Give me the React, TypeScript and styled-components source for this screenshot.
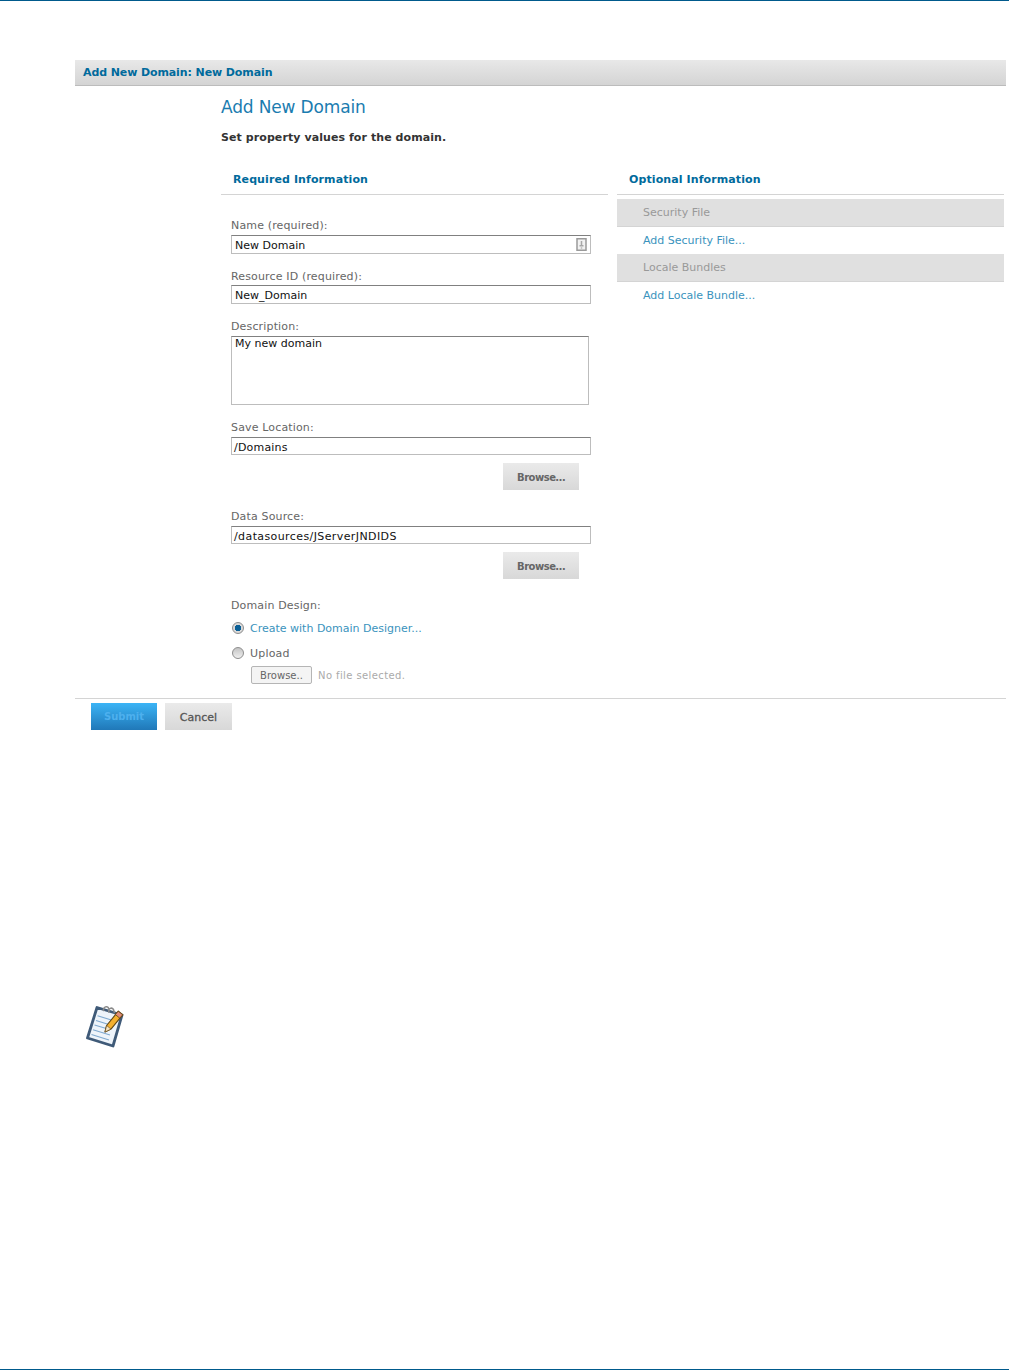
import React from "react";
import styled, { createGlobalStyle } from "styled-components";

const GlobalStyle = createGlobalStyle`
  html, body {
    margin: 0;
    padding: 0;
    background: #fff;
    font-family: "DejaVu Sans", Verdana, sans-serif;
    font-size: 11px;
  }
`;

const Page = styled.div`
  width: 1009px;
  height: 1370px;
  box-sizing: border-box;
  border-top: 1px solid #005a8c;
  border-bottom: 1px solid #005a8c;
  padding: 59px 3px 0 75px;
  overflow: hidden;
`;

const TitleBar = styled.div`
  height: 25px;
  padding-left: 8px;
  display: flex;
  align-items: center;
  background: linear-gradient(#e8e8e8, #d4d4d4);
  border-bottom: 1px solid #bcbcbc;
  color: #006a9c;
  font-size: 11px;
  font-weight: bold;
  letter-spacing: -0.1px;
`;

const Body = styled.div`
  padding-left: 146px;
  padding-right: 2px;
`;

const Heading = styled.h1`
  margin: 10px 0 0;
  height: 22px;
  line-height: 22px;
  font-size: 17px;
  font-weight: normal;
  letter-spacing: -0.15px;
  color: #1a7cb0;
`;

const Intro = styled.p`
  margin: 13px 0 0;
  height: 14px;
  line-height: 14px;
  font-size: 11px;
  font-weight: bold;
  letter-spacing: 0.08px;
  color: #333;
`;

const Columns = styled.div`
  margin-top: 20px;
  display: grid;
  grid-template-columns: 387px 387px;
  column-gap: 9px;
`;

const ColumnHead = styled.div`
  height: 30px;
  padding: 8px 0 0 12px;
  box-sizing: border-box;
  border-bottom: 1px solid #d4d4d4;
  line-height: 14px;
  color: #006a9c;
  font-weight: bold;
  letter-spacing: 0.1px;
`;

const Fields = styled.div`
  padding: 24px 0 0 10px;
`;

const Field = styled.div<{ $gap?: number }>`
  margin-bottom: ${(p) => p.$gap ?? 16}px;
`;

const Label = styled.div<{ $gap?: number }>`
  height: 14px;
  line-height: 14px;
  color: #666;
  letter-spacing: 0.15px;
  margin-bottom: ${(p) => p.$gap ?? 2}px;
`;

const InputBox = styled.div`
  position: relative;
  width: 360px;
  height: 19px;
  box-sizing: border-box;
  border: 1px solid #bdbdbd;
  border-top-color: #808080;
  padding-left: 3px;
  line-height: 20px;
  color: #111;
`;

const PathInput = styled(InputBox)<{ $tracking: number }>`
  height: 18px;
  padding-left: 2px;
  line-height: 19px;
  letter-spacing: ${(p) => p.$tracking}px;
`;

const TextArea = styled(InputBox)`
  width: 358px;
  height: 69px;
  line-height: 13px;
`;

const BrowseRow = styled.div`
  display: flex;
  justify-content: flex-end;
  width: 348px;
  margin-top: 8px;
`;

const GreyButton = styled.div`
  width: 76px;
  height: 27px;
  padding-top: 1px;
  box-sizing: border-box;
  display: flex;
  align-items: center;
  justify-content: center;
  background: linear-gradient(#eaeaea, #d8d8d8);
  color: #666;
  font-size: 10px;
  font-weight: bold;
  letter-spacing: -0.5px;
`;

const FlagIcon = styled.svg`
  position: absolute;
  right: 3px;
  top: 2px;
`;

const RadioRow = styled.div<{ $top: number }>`
  display: flex;
  align-items: center;
  gap: 6px;
  height: 14px;
  margin-top: ${(p) => p.$top}px;
`;

const RadioDot = styled.span<{ $checked?: boolean }>`
  width: 12px;
  height: 12px;
  margin-left: 1px;
  border-radius: 50%;
  box-sizing: border-box;
  border: 1px solid #8d8d8d;
  background: ${(p) =>
    p.$checked
      ? "radial-gradient(circle, #0a5f96 0 3px, #d9d9d9 3.5px)"
      : "linear-gradient(#c4c4c4, #efefef)"};
`;

const LinkText = styled.span`
  color: #3a93bd;
`;

const PlainText = styled.span`
  color: #666;
  letter-spacing: 0.2px;
`;

const FileRow = styled.div`
  display: flex;
  align-items: center;
  gap: 6px;
  margin: 6px 0 0 20px;
`;

const FileButton = styled.div`
  width: 61px;
  height: 18px;
  box-sizing: border-box;
  border: 1px solid #b5b5b5;
  border-radius: 2px;
  background: #f4f4f4;
  color: #666;
  font-size: 10px;
  line-height: 17px;
  text-align: center;
`;

const FileNote = styled.span`
  color: #aaa;
  font-size: 10px;
  letter-spacing: 0.4px;
`;

const SectionBar = styled.div<{ $top: number }>`
  margin-top: ${(p) => p.$top}px;
  height: 28px;
  padding-left: 26px;
  box-sizing: border-box;
  background: #e0e0e0;
  border-bottom: 1px solid #d4d4d4;
  line-height: 28px;
  color: #999;
`;

const SectionLink = styled(LinkText)`
  display: block;
  height: 27px;
  line-height: 28px;
  padding-left: 26px;
`;

const Footer = styled.div`
  margin-top: 14px;
  border-top: 1px solid #d4d4d4;
  padding: 4px 0 0 16px;
  display: flex;
  gap: 8px;
`;

const SubmitButton = styled.div`
  width: 66px;
  height: 27px;
  display: flex;
  align-items: center;
  justify-content: center;
  background: linear-gradient(#3bb4f6, #2078b8);
  color: #4db0ee;
  font-size: 10px;
  font-weight: bold;
`;

const CancelButton = styled(GreyButton)`
  width: 67px;
  font-size: 11px;
  font-weight: normal;
  letter-spacing: 0;
  color: #555;
  -webkit-text-stroke: 0.3px #555;
`;

const NoteIcon = styled.svg`
  display: block;
  margin: 274px 0 0 9px;
`;

export default function App() {
  return (
    <>
      <GlobalStyle />
      <Page>
        <TitleBar>Add New Domain: New Domain</TitleBar>
        <Body>
          <Heading>Add New Domain</Heading>
          <Intro>Set property values for the domain.</Intro>
          <Columns>
            <div>
              <ColumnHead>Required Information</ColumnHead>
              <Fields>
                <Field>
                  <Label>Name (required):</Label>
                  <InputBox>
                    New Domain
                    <FlagIcon width="11" height="13" viewBox="0 0 11 13">
                      <rect x="1" y="0.75" width="9" height="11.5" fill="#f2f2f2" stroke="#9a9a9a" strokeWidth="1.5" />
                      <rect x="4.75" y="3" width="1.5" height="4" fill="#a8a8a8" />
                      <rect x="3.5" y="7" width="4" height="1.5" fill="#a8a8a8" />
                      <rect x="4.75" y="9.25" width="1.5" height="1.5" fill="#b8b8b8" />
                    </FlagIcon>
                  </InputBox>
                </Field>
                <Field>
                  <Label $gap={1}>Resource ID (required):</Label>
                  <InputBox>New_Domain</InputBox>
                </Field>
                <Field>
                  <Label>Description:</Label>
                  <TextArea>My new domain</TextArea>
                </Field>
                <Field $gap={20}>
                  <Label>Save Location:</Label>
                  <PathInput $tracking={0.2}>/Domains</PathInput>
                  <BrowseRow>
                    <GreyButton>Browse…</GreyButton>
                  </BrowseRow>
                </Field>
                <Field $gap={20}>
                  <Label>Data Source:</Label>
                  <PathInput $tracking={0.4}>/datasources/JServerJNDIDS</PathInput>
                  <BrowseRow>
                    <GreyButton>Browse…</GreyButton>
                  </BrowseRow>
                </Field>
                <Label>Domain Design:</Label>
                <RadioRow $top={8}>
                  <RadioDot $checked />
                  <LinkText>Create with Domain Designer...</LinkText>
                </RadioRow>
                <RadioRow $top={11}>
                  <RadioDot />
                  <PlainText>Upload</PlainText>
                </RadioRow>
                <FileRow>
                  <FileButton>Browse..</FileButton>
                  <FileNote>No file selected.</FileNote>
                </FileRow>
              </Fields>
            </div>
            <div>
              <ColumnHead>Optional Information</ColumnHead>
              <SectionBar $top={4}>Security File</SectionBar>
              <SectionLink>Add Security File...</SectionLink>
              <SectionBar $top={0}>Locale Bundles</SectionBar>
              <SectionLink>Add Locale Bundle...</SectionLink>
            </div>
          </Columns>
        </Body>
        <Footer>
          <SubmitButton>Submit</SubmitButton>
          <CancelButton>Cancel</CancelButton>
        </Footer>
        <NoteIcon width="42" height="44" viewBox="0 0 42 44">
          <path d="M13 3.5 L38 11 L29 42 L3.5 34 Z" fill="#eef4fa" stroke="#3f5a78" strokeWidth="2.8" strokeLinejoin="round" />
          <path d="M13.5 11.75 L33 17.7 M12 16.4 L28 21.5 M10.5 21 L24 25 M9 25.7 L26 31 M7.5 30.4 L25 36" stroke="#7fa9cf" strokeWidth="1.1" />
          <path d="M20 7 a2.5 2.5 0 0 1 4.5 -3 l1 3.5 M25 8.5 a2.5 2.5 0 0 1 4.5 -3 l1 3.5" fill="none" stroke="#8a8a8a" strokeWidth="1.5" />
          <path d="M34.3 7.2 L38.7 10.8 L27 25.1 L21 28 L22.6 21.5 Z" fill="#f4b02e" stroke="#5f4412" strokeWidth="1.1" strokeLinejoin="round" />
          <path d="M34.3 7.2 L38.7 10.8 L35.7 14.1 L31.3 10.5 Z" fill="#e28c78" stroke="#5f4412" strokeWidth="0.8" />
          <path d="M22.6 21.5 L21 28 L27 25.1 Z" fill="#f5e2c0" stroke="#5f4412" strokeWidth="0.6" />
        </NoteIcon>
      </Page>
    </>
  );
}
